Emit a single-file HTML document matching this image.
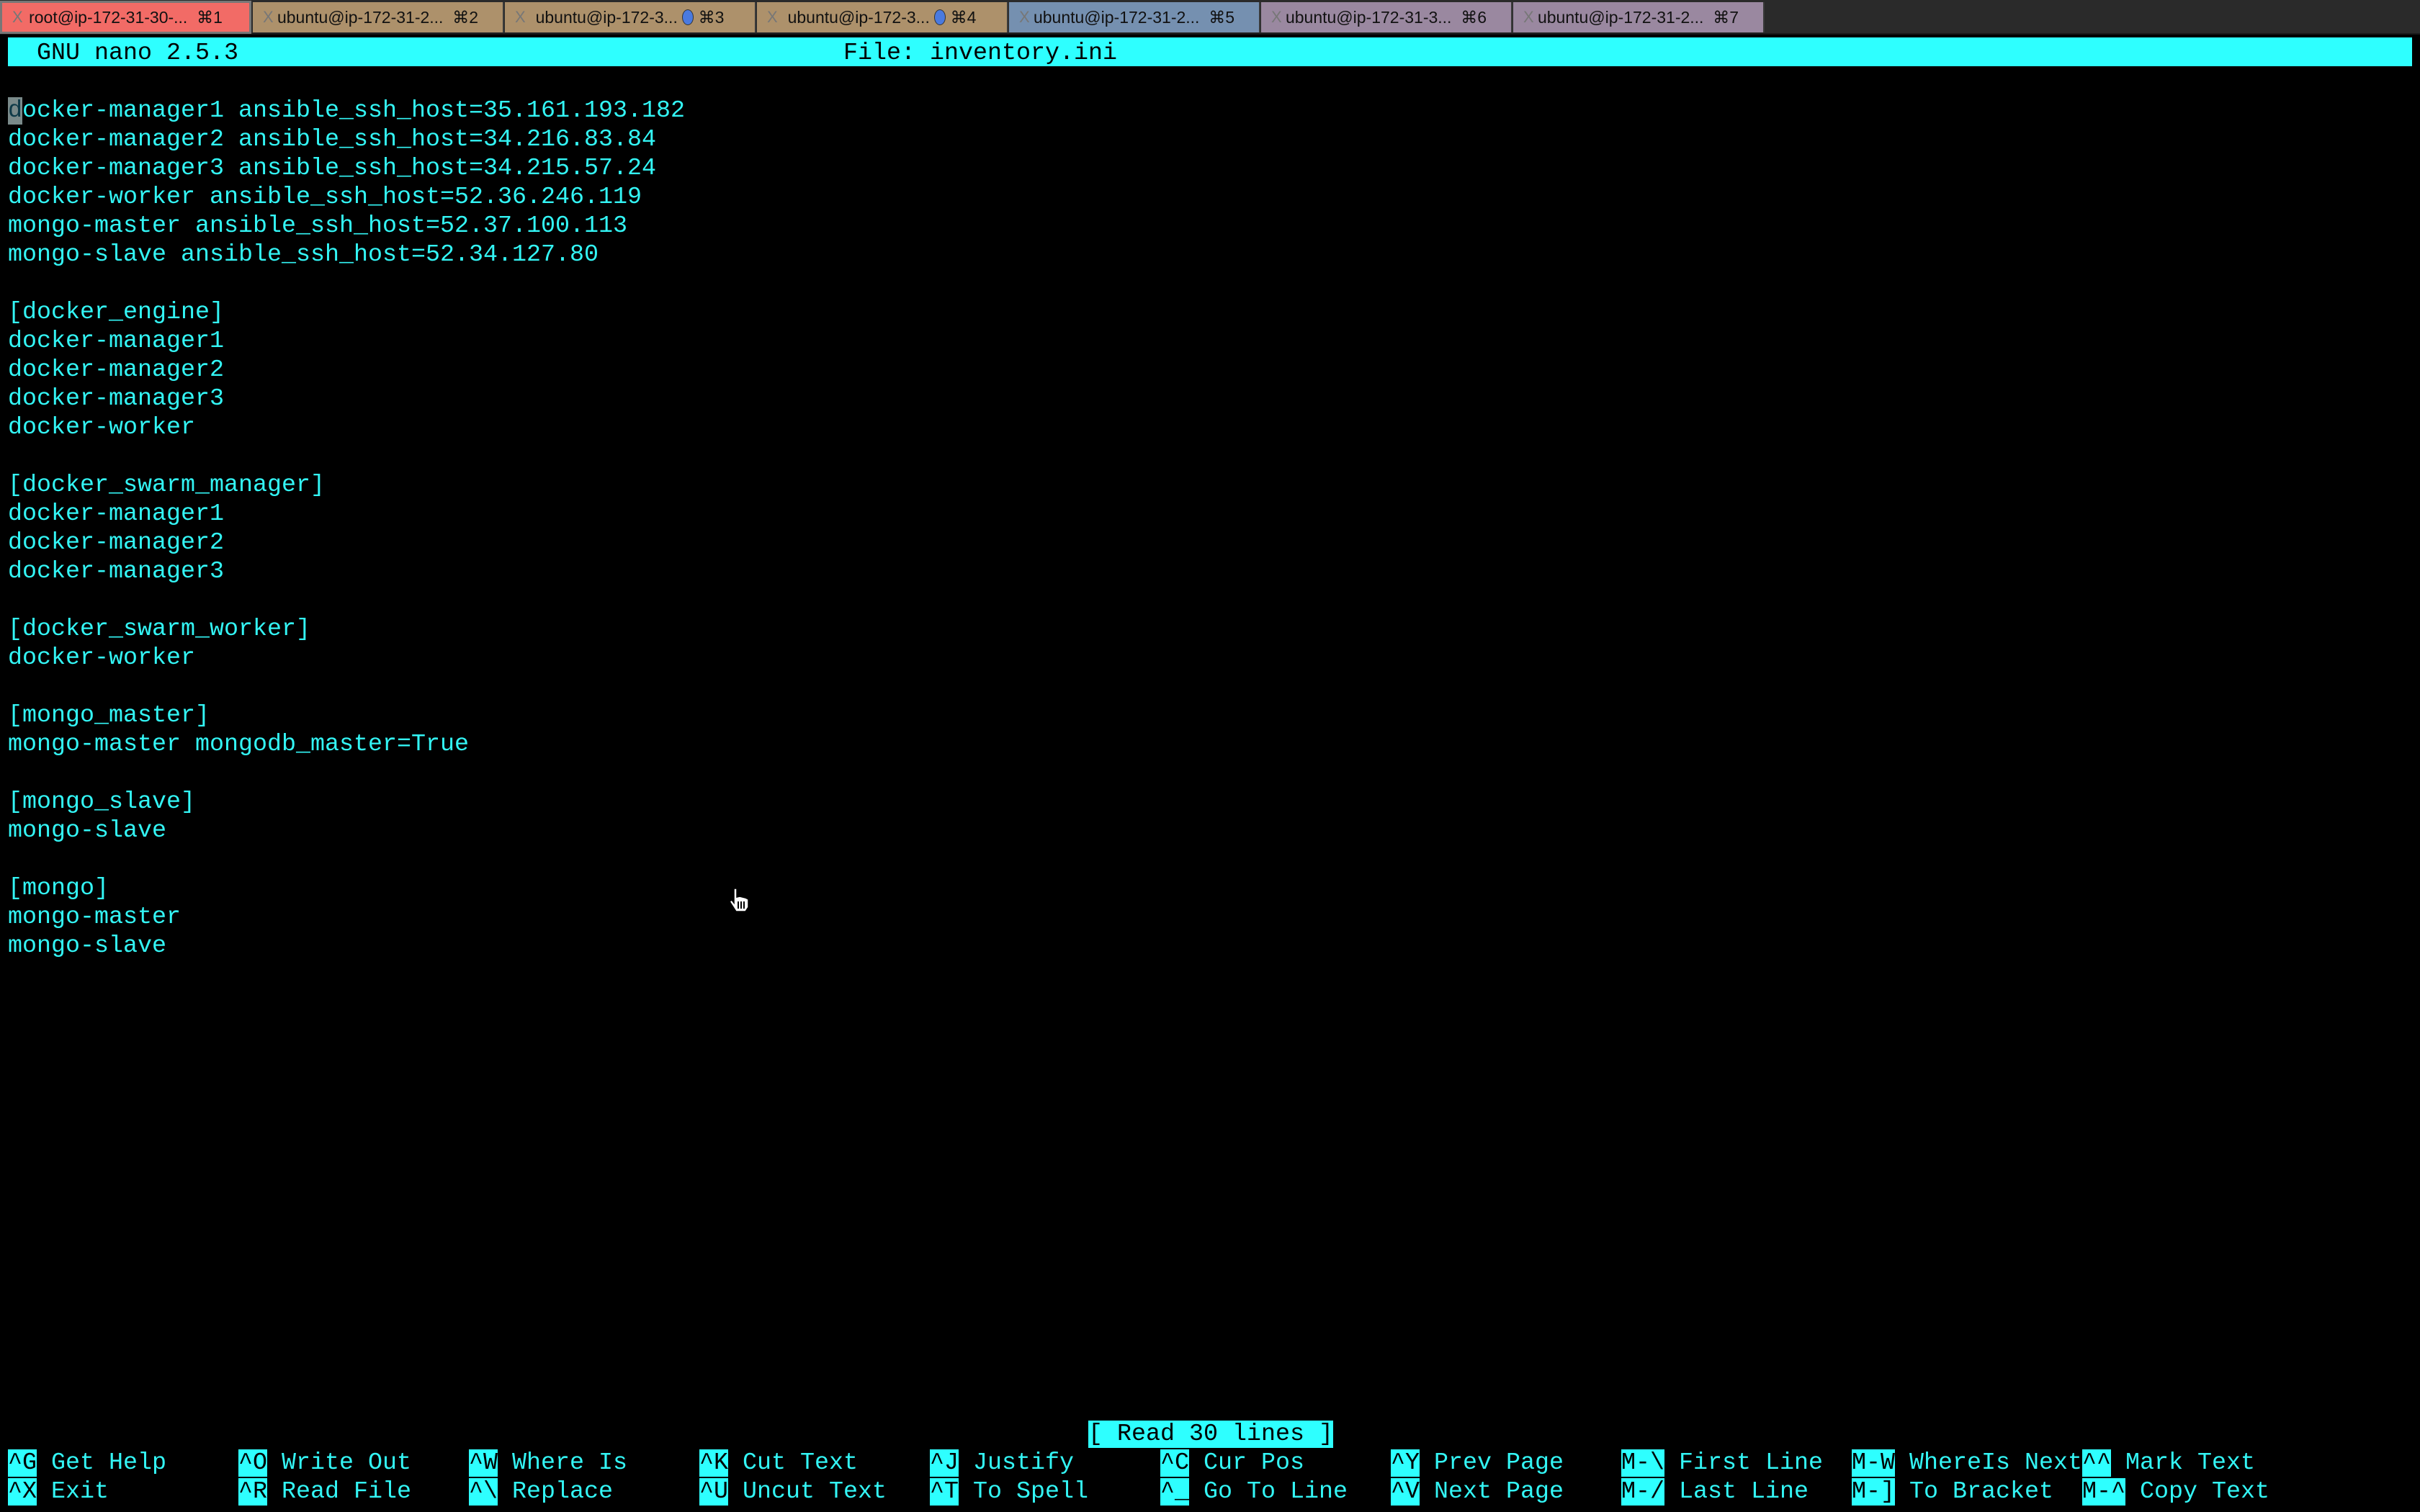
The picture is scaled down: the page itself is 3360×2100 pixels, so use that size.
<!DOCTYPE html>
<html><head><meta charset="utf-8"><style>
html,body{margin:0;padding:0;background:#000;width:3360px;height:2100px;overflow:hidden}
.tabs{position:absolute;left:0;top:0;width:3360px;height:46px;background:#2a2a2a;border-bottom:2px solid #1a1a1a}
.tab{position:absolute;top:3px;height:42px;width:349px;box-sizing:border-box;border-right:2px solid #3a3a3a;font:23px "Liberation Sans",sans-serif;color:#111;line-height:42px;text-align:center}
.tab .x{position:absolute;left:14px;top:0;color:#777;font-size:22px}
.r{position:absolute;left:11px;font:33.33px/40px "Liberation Mono",monospace;color:#33f5f5;white-space:pre;height:40px}
.k{background:#2effff;color:#000}
.cur{background:#7a8a8a;color:#0e3a48}
</style></head><body>
<div class="tabs">
<div class="tab" style="left:0;background:#f26b66;border:3px solid #777;top:1px;height:46px;line-height:40px"><span class="x">X</span>root@ip-172-31-30-...&nbsp;&nbsp;⌘1</div>
<div class="tab" style="left:351px;background:#ad916b"><span class="x">X</span>ubuntu@ip-172-31-2...&nbsp;&nbsp;⌘2</div>
<div class="tab" style="left:701px;background:#ad916b"><span class="x">X</span>ubuntu@ip-172-3... <span style="display:inline-block;width:14px;height:20px;border-radius:50%;background:#4a7ae0;border:1px solid #333;vertical-align:-3px"></span> ⌘3</div>
<div class="tab" style="left:1051px;background:#ad916b"><span class="x">X</span>ubuntu@ip-172-3... <span style="display:inline-block;width:14px;height:20px;border-radius:50%;background:#4a7ae0;border:1px solid #333;vertical-align:-3px"></span> ⌘4</div>
<div class="tab" style="left:1401px;background:#7590b0"><span class="x">X</span>ubuntu@ip-172-31-2...&nbsp;&nbsp;⌘5</div>
<div class="tab" style="left:1751px;background:#9a88a0"><span class="x">X</span>ubuntu@ip-172-31-3...&nbsp;&nbsp;⌘6</div>
<div class="tab" style="left:2101px;background:#9a88a0"><span class="x">X</span>ubuntu@ip-172-31-2...&nbsp;&nbsp;⌘7</div>
</div>
<div style="position:absolute;left:11px;top:52px;width:3338px;height:40px;background:#2effff"></div>
<div class="r" style="top:54px;color:#000">  GNU nano 2.5.3                                          File: inventory.ini</div>
<div class="r" style="top:134px"><span class="cur">d</span>ocker-manager1 ansible_ssh_host=35.161.193.182
docker-manager2 ansible_ssh_host=34.216.83.84
docker-manager3 ansible_ssh_host=34.215.57.24
docker-worker ansible_ssh_host=52.36.246.119
mongo-master ansible_ssh_host=52.37.100.113
mongo-slave ansible_ssh_host=52.34.127.80

[docker_engine]
docker-manager1
docker-manager2
docker-manager3
docker-worker

[docker_swarm_manager]
docker-manager1
docker-manager2
docker-manager3

[docker_swarm_worker]
docker-worker

[mongo_master]
mongo-master mongodb_master=True

[mongo_slave]
mongo-slave

[mongo]
mongo-master
mongo-slave</div>
<svg style="position:absolute;left:1010px;top:1232px" width="34" height="36" viewBox="0 0 34 36"><path d="M9 2 L13 2 L13 14 L17 13 L21 14 L25 15 L29 17 L29 28 L25 34 L12 34 L3 20 L6 18 L9 22 Z" fill="#fff" stroke="#000" stroke-width="1.5"/><path d="M15 20v10M19 20v10M23 20v10" stroke="#000" stroke-width="2"/></svg>
<div class="r" style="top:1972px;left:1511px"><span class="k">[ Read 30 lines ]</span></div>

<div class="r" style="top:2012px;left:11px"><span class="k">^G</span> Get Help</div>
<div class="r" style="top:2012px;left:331px"><span class="k">^O</span> Write Out</div>
<div class="r" style="top:2012px;left:651px"><span class="k">^W</span> Where Is</div>
<div class="r" style="top:2012px;left:971px"><span class="k">^K</span> Cut Text</div>
<div class="r" style="top:2012px;left:1291px"><span class="k">^J</span> Justify</div>
<div class="r" style="top:2012px;left:1611px"><span class="k">^C</span> Cur Pos</div>
<div class="r" style="top:2012px;left:1931px"><span class="k">^Y</span> Prev Page</div>
<div class="r" style="top:2012px;left:2251px"><span class="k">M-\</span> First Line</div>
<div class="r" style="top:2012px;left:2571px"><span class="k">M-W</span> WhereIs Next</div>
<div class="r" style="top:2012px;left:2891px"><span class="k">^^</span> Mark Text</div>

<div class="r" style="top:2052px;left:11px"><span class="k">^X</span> Exit</div>
<div class="r" style="top:2052px;left:331px"><span class="k">^R</span> Read File</div>
<div class="r" style="top:2052px;left:651px"><span class="k">^\</span> Replace</div>
<div class="r" style="top:2052px;left:971px"><span class="k">^U</span> Uncut Text</div>
<div class="r" style="top:2052px;left:1291px"><span class="k">^T</span> To Spell</div>
<div class="r" style="top:2052px;left:1611px"><span class="k">^_</span> Go To Line</div>
<div class="r" style="top:2052px;left:1931px"><span class="k">^V</span> Next Page</div>
<div class="r" style="top:2052px;left:2251px"><span class="k">M-/</span> Last Line</div>
<div class="r" style="top:2052px;left:2571px"><span class="k">M-]</span> To Bracket</div>
<div class="r" style="top:2052px;left:2891px"><span class="k">M-^</span> Copy Text</div>
</body></html>
